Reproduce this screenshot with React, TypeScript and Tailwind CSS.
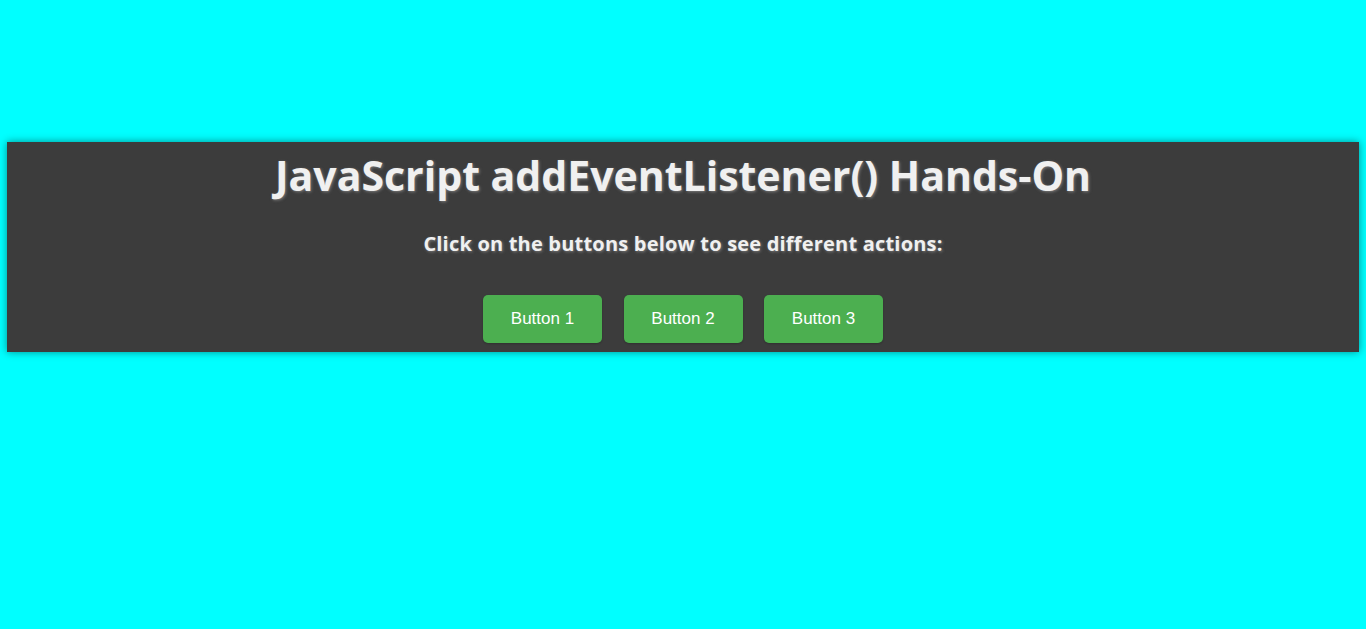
export default function App() {
  return (
    <div className="min-h-screen w-full bg-[#00ffff] pt-[142px] px-[7px]">
      <div className="bg-[#3c3c3c] h-[210px] shadow-[0_0_8px_rgba(0,0,0,0.45)] flex flex-col items-center text-center">
        <h1
          className="text-[#f0f0f0] font-bold text-[41px] leading-[66px] [text-shadow:1px_1px_3px_#7a7a7a]"
          style={{ fontFamily: '"Open Sans", sans-serif' }}
        >
          JavaScript addEventListener() Hands-On
        </h1>
        <p
          className="mt-[22px] text-[#f0f0f0] font-bold text-[20px] leading-[28px] tracking-[0.2px] [text-shadow:1px_1px_3px_#7a7a7a]"
          style={{ fontFamily: '"Open Sans", sans-serif' }}
        >
          Click on the buttons below to see different actions:
        </p>
        <div className="mt-[37px] flex gap-[21.5px]">
          {["Button 1", "Button 2", "Button 3"].map((b) => (
            <button
              key={b}
              className="bg-[#4caf50] text-white rounded-[5px] h-[48px] w-[119px] text-[17px] shadow-[0_1px_2px_rgba(0,0,0,0.2)]"
              style={{ fontFamily: '"Liberation Sans", Arial, sans-serif' }}
            >
              {b}
            </button>
          ))}
        </div>
      </div>
    </div>
  );
}
